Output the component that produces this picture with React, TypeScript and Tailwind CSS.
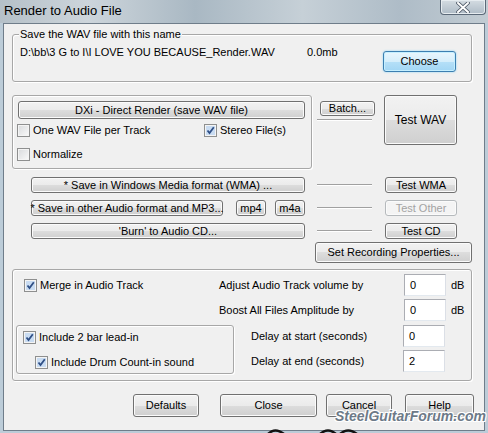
import type { ReactNode } from 'react';

interface BtnProps {
  children: ReactNode;
  className?: string;
  disabled?: boolean;
  primary?: boolean;
}

function Btn({ children, className = '', disabled = false, primary = false }: BtnProps) {
  const face = primary
    ? 'border-[#3c7fb1] bg-[linear-gradient(#e9f6fd,#d5eefb_50%,#b6e0f8_50%,#a2d6f4)] shadow-[inset_0_0_0_1px_#c5efff,0_0_2px_#7fd0f5] text-black'
    : disabled
      ? 'border-[#b5b9bc] bg-[#f4f4f4] shadow-[inset_0_0_0_1px_#fbfbfb] text-[#a3a3a3]'
      : 'border-[#707070] bg-[linear-gradient(#f2f2f2,#ebebeb_50%,#dddddd_50%,#cfcfcf)] shadow-[inset_0_0_0_1px_#fbfbfb] text-black';
  return (
    <div
      className={`${face} ${className} flex shrink-0 items-center justify-center rounded-[3px] border text-[11px] leading-none whitespace-nowrap`}
    >
      {children}
    </div>
  );
}

function Check({ checked = false, label, className = '' }: { checked?: boolean; label: string; className?: string }) {
  return (
    <div className={`${className} flex items-center h-[13px]`}>
      <div className="w-[13px] h-[13px] shrink-0 border border-[#8e8f8f] bg-[linear-gradient(135deg,#d8dadc,#fafafa)] shadow-[inset_0_0_0_1px_#f4f4f4] flex items-center justify-center">
        {checked && (
          <svg width="11" height="11" viewBox="0 0 11 11">
            <rect x="1" y="1" width="9" height="9" fill="#c9dcf2" />
            <path d="M2.5 5.5 L4.5 8 L8.8 2.2" stroke="#2f4f86" strokeWidth="1.8" fill="none" />
          </svg>
        )}
      </div>
      <span className="ml-[3px] text-[11px] leading-none text-black whitespace-nowrap">{label}</span>
    </div>
  );
}

function Field({ value }: { value: string }) {
  return (
    <div className="w-[42px] h-[22px] shrink-0 bg-white border border-[#abadb3] border-b-[#e3e9ef] border-r-[#dbdfe6] flex items-center pl-[5px] text-[11px] leading-none text-black">
      {value}
    </div>
  );
}

function Sep({ className = '' }: { className?: string }) {
  return <div className={`${className} h-[2px] border-t border-[#a0a0a0] border-b border-b-white`} />;
}

const groupCls = 'rounded-[3px] border border-[#a7a7a7] shadow-[inset_1px_1px_0_#fff,1px_1px_0_#fff]';

export default function App() {
  return (
    <div className="relative w-[488px] h-[433px] overflow-hidden flex flex-col bg-[#bcccd8] font-['Liberation_Sans',Arial,sans-serif]">
      {/* title bar */}
      <div className="h-[23px] shrink-0 flex items-start justify-between bg-[linear-gradient(90deg,#b5c0c8_0%,#cdd5db_18%,#a9b8c3_40%,#c6d0d7_62%,#aebcc7_82%,#c2ccd3_100%)]">
        <span className="pl-[4px] pt-[4px] text-[13px] leading-none text-black">Render to Audio File</span>
        <div className="mr-[2px] w-[46px] h-[15px] rounded-b-[4px] border border-t-0 border-[#5b6978] bg-[linear-gradient(#d4dce2,#aebbc6)] shadow-[inset_0_0_0_1px_#e6ecf0] flex items-center justify-center">
          <svg width="14" height="11" viewBox="0 0 14 11">
            <path d="M2 1 L12 10 M12 1 L2 10" stroke="#4a5563" strokeWidth="3.6" strokeLinecap="round" />
            <path d="M2 1 L12 10 M12 1 L2 10" stroke="#ffffff" strokeWidth="2" strokeLinecap="round" />
          </svg>
        </div>
      </div>

      {/* client area */}
      <div className="ml-[3px] w-[482px] h-[408px] shrink-0 flex flex-col bg-[#f0f0f0] border border-[#6f7d8a]">
        {/* file name group */}
        <div className={`${groupCls} relative mt-[10px] ml-[8px] w-[460px] h-[48px] shrink-0 flex items-start`}>
          <span className="absolute left-[6px] -top-[7px] px-[1px] bg-[#f0f0f0] text-[11px] leading-[13px] text-black">
            Save the WAV file with this name
          </span>
          <span className="w-[294px] pl-[7px] pt-[11px] text-[11px] leading-[13px] text-black whitespace-nowrap">
            D:\bb\3 G to I\I LOVE YOU BECAUSE_Render.WAV
          </span>
          <span className="pt-[11px] text-[11px] leading-[13px] text-black">0.0mb</span>
          <Btn primary className="ml-auto mt-[16px] mr-[15px] w-[73px] h-[21px]">Choose</Btn>
        </div>

        {/* render group row */}
        <div className="mt-[13px] ml-[8px] flex items-start">
          <div className={`${groupCls} w-[300px] h-[74px] shrink-0 flex flex-col`}>
            <Btn className="mt-[5px] ml-[5px] w-[287px] h-[18px]">DXi - Direct Render (save WAV file)</Btn>
            <div className="mt-[5px] ml-[4px] flex">
              <Check label="One WAV File per Track" className="w-[187px]" />
              <Check checked label="Stereo File(s)" />
            </div>
            <Check label="Normalize" className="mt-[11px] ml-[4px]" />
          </div>
          <div className="ml-[5px] mt-[6px] flex flex-col">
            <Btn className="ml-[3px] w-[55px] h-[15px]">Batch...</Btn>
            <Sep className="mt-[3px] w-[55px]" />
          </div>
          <Btn className="ml-[9px] w-[73px] h-[50px] text-[12px]">Test WAV</Btn>
        </div>

        {/* save formats */}
        <div className="mt-[8px] ml-[27px] flex items-center h-[16px]">
          <Btn className="w-[274px] h-[16px]">* Save in Windows Media format (WMA) ...</Btn>
          <Sep className="ml-[12px] w-[55px]" />
          <Btn className="ml-[13px] w-[72px] h-[16px]">Test WMA</Btn>
        </div>
        <div className="mt-[7px] ml-[27px] flex items-center h-[16px]">
          <Btn className="w-[192px] h-[16px]">* Save in other Audio format and MP3...</Btn>
          <Btn className="ml-[13px] w-[30px] h-[16px]">mp4</Btn>
          <Btn className="ml-[9px] w-[30px] h-[16px]">m4a</Btn>
          <Sep className="ml-[12px] w-[55px]" />
          <Btn disabled className="ml-[13px] w-[72px] h-[16px]">Test Other</Btn>
        </div>
        <div className="mt-[7px] ml-[27px] flex items-center h-[16px]">
          <Btn className="w-[274px] h-[16px]">'Burn' to Audio CD...</Btn>
          <Sep className="ml-[12px] w-[55px]" />
          <Btn className="ml-[13px] w-[72px] h-[16px]">Test CD</Btn>
        </div>
        <Btn className="mt-[3px] ml-[311px] w-[157px] h-[21px]">Set Recording Properties...</Btn>

        {/* merge group */}
        <div className={`${groupCls} mt-[6px] ml-[8px] w-[460px] h-[112px] shrink-0 flex flex-col`}>
          <div className="mt-[4px] flex items-center h-[22px] text-[11px] leading-none text-black">
            <div className="w-[206px] pl-[11px]">
              <Check checked label="Merge in Audio Track" />
            </div>
            <span className="w-[185px]">Adjust Audio Track volume by</span>
            <Field value="0" />
            <span className="ml-[5px]">dB</span>
          </div>
          <div className="mt-[3px] flex items-center h-[22px] text-[11px] leading-none text-black">
            <span className="ml-[206px] w-[185px]">Boost All Files Amplitude by</span>
            <Field value="0" />
            <span className="ml-[5px]">dB</span>
          </div>
          <div className="mt-[4px] flex items-start">
            <div className={`${groupCls} ml-[3px] w-[218px] h-[49px] flex flex-col`}>
              <Check checked label="Include 2 bar lead-in" className="mt-[5px] ml-[6px]" />
              <Check checked label="Include Drum Count-in sound" className="mt-[12px] ml-[18px]" />
            </div>
            <div className="ml-[17px] flex flex-col text-[11px] leading-none text-black">
              <div className="flex items-center h-[22px]">
                <span className="w-[152px]">Delay at start (seconds)</span>
                <Field value="0" />
              </div>
              <div className="mt-[3px] flex items-center h-[22px]">
                <span className="w-[152px]">Delay at end (seconds)</span>
                <Field value="2" />
              </div>
            </div>
          </div>
        </div>

        {/* bottom buttons */}
        <div className="mt-[13px] ml-[129px] flex">
          <Btn className="w-[66px] h-[23px]">Defaults</Btn>
          <Btn className="ml-[21px] w-[97px] h-[23px]">Close</Btn>
          <Btn className="ml-[9px] w-[66px] h-[23px]">Cancel</Btn>
          <Btn className="ml-[13px] w-[69px] h-[23px]">Help</Btn>
        </div>
      </div>

      {/* forum watermark */}
      <span className="absolute left-[335px] top-[410px] text-[14px] font-bold italic leading-[12px] text-[#6d7a88] [text-shadow:1px_1px_0_#fff,-1px_-1px_0_#fff,1px_-1px_0_#fff,-1px_1px_0_#fff]">
        SteelGuitarForum.com
      </span>
      <svg className="absolute left-[262px] top-[426px]" width="100" height="7" viewBox="0 0 100 7">
        <path d="M6 8 Q13 1 22 8" stroke="#111" strokeWidth="2.5" fill="none" />
        <path d="M58 8 Q66 1 74 8 M78 8 Q86 1 95 8" stroke="#111" strokeWidth="2.5" fill="none" />
      </svg>
    </div>
  );
}
